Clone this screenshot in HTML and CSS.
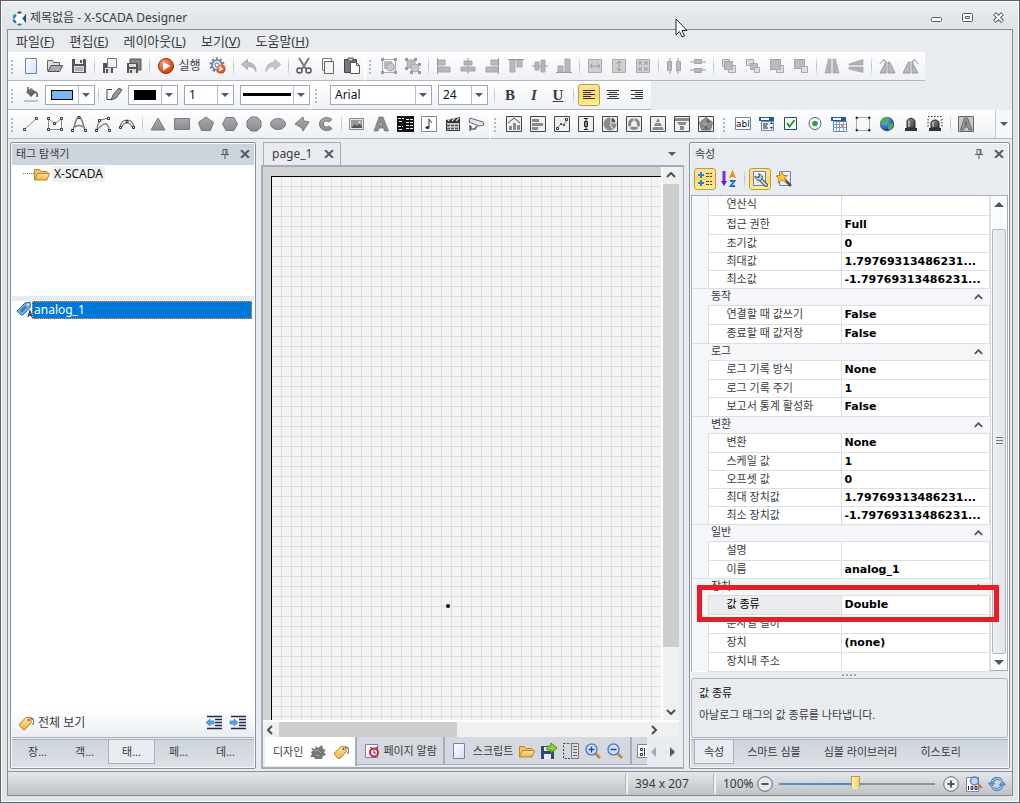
FILE: index.html
```html
<!DOCTYPE html>
<html lang="ko">
<head>
<meta charset="utf-8">
<title>제목없음 - X-SCADA Designer</title>
<link rel="stylesheet" href="styles.css">
</head>
<body>
<svg class="defs" aria-hidden="true">
  <defs>
    <linearGradient id="g-grey" x1="0" y1="0" x2="0" y2="1"><stop offset="0" stop-color="#a9abae"/><stop offset="1" stop-color="#898b8f"/></linearGradient>
    <linearGradient id="g-dark" x1="0" y1="0" x2="1" y2="1"><stop offset="0" stop-color="#999"/><stop offset="1" stop-color="#3c3c3c"/></linearGradient>
    <linearGradient id="g-doc" x1="0" y1="0" x2="1" y2="1"><stop offset="0" stop-color="#fff"/><stop offset="1" stop-color="#d3e0f8"/></linearGradient>
    <linearGradient id="g-gold" x1="0" y1="0" x2="0" y2="1"><stop offset="0" stop-color="#ffe9ae"/><stop offset="1" stop-color="#efaf42"/></linearGradient>
    <radialGradient id="g-red" cx=".35" cy=".3" r=".8"><stop offset="0" stop-color="#ff9a6a"/><stop offset="1" stop-color="#cf2c06"/></radialGradient>
    <radialGradient id="g-globe" cx=".35" cy=".3" r=".8"><stop offset="0" stop-color="#7db8f5"/><stop offset="1" stop-color="#07288a"/></radialGradient>
    <symbol id="i-tag" viewBox="0 0 16 16"><path d="M11 3.500a3.500 3.500 0 0 1 3.500 6" fill="none" stroke="#777" stroke-width="1.500"/><path d="M1.500 9 8 2.500l4.500.5.8 4.500L7 14.500H5L1.500 10.500z" fill="url(#g-gold)" stroke="#b5791f"/><circle cx="10.500" cy="5" r="1" fill="#7a4a10"/></symbol>
    <symbol id="i-folder" viewBox="0 0 16 16"><path d="M.5 14V3.500h5l1.500 2h6V8" fill="#f3c565" stroke="#bf8421"/><path d="M.5 14 3.500 7.500h12L13 14z" fill="url(#g-gold)" stroke="#bf8421"/></symbol>
    <symbol id="i-pin" viewBox="0 0 8 10"><path d="M2 .5h4v5H2zM0 5.500h8M4 6v4M5 1v4" fill="none" stroke="#555b66"/></symbol>
    <symbol id="i-close" viewBox="0 0 10 8"><path d="M1 0 9 8M9 0 1 8" stroke="#555b66" stroke-width="2"/></symbol>
    <symbol id="i-new" viewBox="0 0 16 16"><path d="M2.500.5h11v15h-11z" fill="url(#g-doc)" stroke="#6c86bb"/></symbol>
    <symbol id="i-up" viewBox="0 0 10 6"><path d="m1 5 4-4 4 4" fill="none" stroke="#505050" stroke-width="2"/></symbol>
    <symbol id="i-lens" viewBox="0 0 16 16"><path d="m10 10 5 5" stroke="#c98a45" stroke-width="3"/><circle cx="6.500" cy="6.500" r="5.500" fill="#cfe2fb" stroke="#5b84bd" stroke-width="1.500"/></symbol>
  </defs>
</svg>

<div class="window">
  <header class="titlebar">
    <svg class="logo" viewBox="0 0 16 16"><circle cx="8" cy="8" r="5.500" fill="#fff"/><path d="M5 2 8 0l3 2-3 1z" fill="#3e4b5c"/><path d="M1 4.500 4 3l1 2-2 3H1z" fill="#1d9aa6"/><path d="M1 9h2l2 3-1.500 1L1 11z" fill="#1b6fa8"/><path d="m5 14 3-1 3 1-3 2z" fill="#2d86a3"/><path d="M15 3v10l-4-5z" fill="#1c4f86"/></svg>
    <h1>제목없음 - X-SCADA Designer</h1>
    <div class="window-buttons">
      <button aria-label="최소화"><svg viewBox="0 0 12 12"><rect x=".5" y="5.500" width="10" height="4" rx="1" fill="#fff" stroke="#555b66"/></svg></button>
      <button aria-label="최대화"><svg viewBox="0 0 12 12"><rect x=".5" y="1.500" width="10" height="8" rx="1" fill="#fff" stroke="#555b66"/><path d="M3.500 4.500h4v2h-4z" fill="none" stroke="#555b66"/></svg></button>
      <button aria-label="닫기"><svg viewBox="0 0 12 12"><path d="m1.500 1.500 8 8M9.500 1.500l-8 8" stroke="#555b66" stroke-width="4"/><path d="m2 2 7 7M9 2 2 9" stroke="#fff" stroke-width="2"/></svg></button>
    </div>
    <svg class="cursor" viewBox="0 0 13 20"><path d="M1 1v16l3.500-3.500 2.500 5.500 2.500-1-2.500-5.500h5z" fill="#fff" stroke="#20222c"/></svg>
  </header>

  <div class="frame">
    <nav class="menu">
      <button>파일(<u>F</u>)</button><button>편집(<u>E</u>)</button><button>레이아웃(<u>L</u>)</button><button>보기(<u>V</u>)</button><button>도움말(<u>H</u>)</button>
    </nav>

    <div class="toolbar-row">
      <div class="toolbar">
        <span class="grip"></span>
        <button class="tb" aria-label="새로 만들기"><svg><use href="#i-new"/></svg></button>
        <button class="tb" aria-label="열기"><svg><path d="M.5 13V2.500h5l1 2h6V7" fill="#ddd" stroke="#666"/><path d="m1 13.500 3-6h11.500l-3 6z" fill="#aaa" stroke="#555"/></svg></button>
        <button class="tb" aria-label="저장"><svg><path d="M1 1h13l1 1v13H1z" fill="#555"/><path d="M4 1h8v5H4z" fill="#eee"/><path d="M9 2h2v3H9z" fill="#555"/><path d="M3 8h10v6H3z" fill="#ddd"/><path d="M4 10h8M4 12h8" stroke="#888"/></svg></button>
        <span class="sep"></span>
        <button class="tb" aria-label="다른 이름으로 저장"><svg><path d="M1 5h10v10H1z" fill="#555"/><path d="M3 10h6v5H3z" fill="#ddd"/><path d="M4 11h2v4H4z" fill="#555"/><path d="M5.500.5h9v9h-9z" fill="#f4f4f4" stroke="#777"/></svg></button>
        <button class="tb" aria-label="모두 저장"><svg><path d="M4 1h11v11H4z" fill="#888" stroke="#555"/><path d="M1 5h11v10H1z" fill="#555"/><path d="M3 6h7v3H3zM3 11h7v4H3z" fill="#ddd"/><path d="M4 12h2v3H4z" fill="#555"/></svg></button>
        <span class="sep"></span>
        <button class="tb run"><svg><circle cx="8" cy="8" r="7.500" fill="url(#g-red)" stroke="#a32606"/><path d="m5 3.500 7.500 4.500L5 12.500z" fill="#fff"/></svg>실행</button>
        <button class="tb" aria-label="실행 설정"><svg><circle cx="7" cy="7" r="5" fill="#dde6f5" stroke="#61799f" stroke-width="1.500"/><circle cx="7" cy="7" r="6.500" fill="none" stroke="#61799f" stroke-width="2" stroke-dasharray="2 2.100"/><circle cx="7" cy="7" r="2" fill="#fff" stroke="#61799f"/><circle cx="11" cy="11" r="4.500" fill="url(#g-red)"/><path d="m9.500 8.500 4 2.500-4 2.500z" fill="#fff"/></svg></button>
        <span class="sep"></span>
        <button class="tb" aria-label="실행 취소"><svg><path d="m.5 6.500 6-5v3c5 0 8.500 3 8.500 9-2-4-4-5-8.500-5v3z" fill="#bcbcbc" stroke="#aaa"/></svg></button>
        <button class="tb" aria-label="다시 실행"><svg><path d="m15.500 6.500-6-5v3c-5 0-8.500 3-8.500 9 2-4 4-5 8.500-5v3z" fill="#c4c4c4" stroke="#b4b4b4"/></svg></button>
        <span class="sep"></span>
        <button class="tb" aria-label="잘라내기"><svg><path d="m3 0 7 11M13 0 6 11" stroke="#777" stroke-width="2"/><circle cx="3.500" cy="12.500" r="2.500" fill="#fff" stroke="#555" stroke-width="1.500"/><circle cx="12.500" cy="12.500" r="2.500" fill="#fff" stroke="#555" stroke-width="1.500"/></svg></button>
        <button class="tb" aria-label="복사"><svg><path d="M2.500.5h9v12h-9z" fill="#fff" stroke="#777"/><path d="M4.500 3.500h9v12h-9z" fill="#f4f4f4" stroke="#666"/></svg></button>
        <button class="tb" aria-label="붙여넣기"><svg><path d="M.5 1.500h12v13H.5z" fill="#777" stroke="#444"/><path d="M4 0h5v3H4z" fill="#ccc" stroke="#555"/><path d="M6.500 4.500h6l3 3v8h-9z" fill="#fff" stroke="#555"/><path d="M12.500 4.500v3h3" fill="none" stroke="#555"/></svg></button>
      </div>
      <div class="toolbar split">
        <span class="grip"></span>
        <button class="tb" aria-label="그룹"><svg><path d="M1.500 1.500h13v13h-13z" fill="none" stroke="#aaa"/><path d="M3 3h8v8H3z" fill="#bbb"/><circle cx="9.500" cy="9" r="4" fill="#c8c8c8" stroke="#a6a6a6"/><path d="M0 0h3v3H0zM13 0h3v3h-3zM0 13h3v3H0zM13 13h3v3h-3z" fill="#999"/></svg></button>
        <button class="tb" aria-label="그룹 해제"><svg><path d="M2 2h8v8H2z" fill="#bbb" stroke="#aaa"/><circle cx="10" cy="10" r="4" fill="#c8c8c8" stroke="#a6a6a6"/><path d="M0 0h3v3H0zM9 0h3v3H9zM0 9h3v3H0zM13 5h3v3h-3zM5 13h3v3H5zM13 13h3v3h-3z" fill="#999"/></svg></button>
        <span class="sep"></span>
        <button class="tb" aria-label="왼쪽 맞춤"><svg><path d="M2 2h7v5H2zM2 9h12v5H2z" fill="#b9b9b9" stroke="#a6a6a6"/><path d="M1.500 0v16" stroke="#999"/></svg></button>
        <button class="tb" aria-label="가운데 맞춤"><svg><path d="M8 0v16" stroke="#999"/><path d="M4 3h8v4H4zM1 9h14v4H1z" fill="#b5b5b5" stroke="#a6a6a6"/></svg></button>
        <button class="tb" aria-label="오른쪽 맞춤"><svg><path d="M7 2h7v5H7zM2 9h12v5H2z" fill="#b9b9b9" stroke="#a6a6a6"/><path d="M14.500 0v16" stroke="#999"/></svg></button>
        <button class="tb" aria-label="위쪽 맞춤"><svg><path d="M2 2h5v12H2zM9 2h5v7H9z" fill="#b9b9b9" stroke="#a6a6a6"/><path d="M0 1.500h16" stroke="#999"/></svg></button>
        <button class="tb" aria-label="중간 맞춤"><svg><path d="M0 8h16" stroke="#999"/><path d="M3 4h4v8H3zM9 2h4v12H9z" fill="#b5b5b5" stroke="#a6a6a6"/></svg></button>
        <button class="tb" aria-label="아래쪽 맞춤"><svg><path d="M2 8h5v6H2zM9 1h5v13H9z" fill="#b9b9b9" stroke="#a6a6a6"/><path d="M0 14.500h16" stroke="#999"/></svg></button>
        <span class="sep"></span>
        <button class="tb" aria-label="너비 같게"><svg><path d="M1.500 1.500h13v13h-13z" fill="#d0d0d0" stroke="#aaa"/><path d="M3 8h10M5.500 5.500 3 8l2.500 2.500M10.500 5.500 13 8l-2.500 2.500" fill="none" stroke="#999"/></svg></button>
        <button class="tb" aria-label="높이 같게"><svg><path d="M1.500 1.500h13v13h-13z" fill="#d0d0d0" stroke="#aaa"/><path d="M8 3v10M5.500 5.500 8 3l2.500 2.500M5.500 10.500 8 13l2.500-2.500" fill="none" stroke="#999"/></svg></button>
        <button class="tb" aria-label="크기 같게"><svg><path d="M1.500 1.500h13v13h-13z" fill="#d0d0d0" stroke="#aaa"/><path d="m4 4 3 3M12 4 9 7M4 12l3-3M12 12 9 9M4 7V4h3M9 4h3v3M4 9v3h3M9 12h3V9" fill="none" stroke="#999"/></svg></button>
        <span class="sep"></span>
        <button class="tb" aria-label="가로 간격"><svg><path d="M4 0v16M12 0v16" stroke="#999"/><path d="M1.500 3.500h4v9h-4zM10.500 3.500h4v9h-4z" fill="#bbb" stroke="#a4a4a4"/></svg></button>
        <button class="tb" aria-label="세로 간격"><svg><path d="M0 4h16M0 12h16" stroke="#999"/><path d="M4.500 1.500h7v4h-7zM4.500 10.500h7v4h-7z" fill="#bbb" stroke="#a4a4a4"/></svg></button>
        <span class="sep"></span>
        <button class="tb" aria-label="맨 앞으로"><svg><path d="M1.500 1.500h7v7h-7zM7.500 7.500h7v7h-7z" fill="#ddd" stroke="#aaa"/><path d="M3.500 3.500h8v8h-8z" fill="#bbb" stroke="#a4a4a4"/></svg></button>
        <button class="tb" aria-label="앞으로"><svg><path d="M1.500 1.500h7v6h-7z" fill="#ddd" stroke="#aaa"/><path d="M5.500 5.500h7v6h-7z" fill="#bbb" stroke="#a4a4a4"/><path d="M9.500 9.500h5v5h-5z" fill="#ddd" stroke="#aaa"/></svg></button>
        <button class="tb" aria-label="뒤로"><svg><path d="M7.500 7.500h7v7h-7z" fill="#ddd" stroke="#aaa"/><path d="M1.500 1.500h10v10h-10z" fill="#bbb" stroke="#a4a4a4"/></svg></button>
        <button class="tb" aria-label="맨 뒤로"><svg><path d="M1.500 1.500h10v9h-10z" fill="#bbb" stroke="#a4a4a4"/><path d="M8.500 8.500h6v6h-6z" fill="#ddd" stroke="#aaa"/></svg></button>
        <span class="sep"></span>
        <button class="tb" aria-label="좌우 대칭"><svg><path d="M4.500 1H7v14H1zM9 1h2.500L15 15H9z" fill="#b2b2b2" stroke="#999" stroke-width=".6"/></svg></button>
        <button class="tb" aria-label="상하 대칭"><svg><path d="M1 6 15 1.500V7H1zM1 9h14v5.500L1 11z" fill="#b2b2b2" stroke="#999" stroke-width=".6"/></svg></button>
        <span class="sep"></span>
        <button class="tb" aria-label="왼쪽 회전"><svg><path d="M7 4v11H1zM9 4h1.500L16 15H9z" fill="#bbb" stroke="#999"/><path d="M1 6c1-4 4-4 6-2M4 1l3.500 3" fill="none" stroke="#999"/></svg></button>
        <button class="tb" aria-label="오른쪽 회전"><svg><path d="M9 4v11h6zM7 4H5.500L0 15h7z" fill="#bbb" stroke="#999"/><path d="M15 6c-1-4-4-4-6-2M12 1 8.500 4" fill="none" stroke="#999"/></svg></button>
        <span class="endpad"></span>
      </div>
    </div>

    <div class="toolbar-row">
      <div class="toolbar">
        <span class="grip"></span>
        <button class="tb" aria-label="채우기"><svg><path d="M1 13h14v2H1z" fill="#c4c4c4"/><path d="m3 5 5-4 5 4-5 5z" fill="url(#g-dark)"/><path d="M5 0v6M12 5c3 0 2 3 2 5" fill="none" stroke="#555" stroke-width="1.500"/></svg></button>
        <span class="combo w50"><select class="swatch blue" aria-label="채우기 색"><option label=" "></option></select></span>
        <span class="sep"></span>
        <button class="tb" aria-label="선"><svg><path d="M6 2.500H1v10h5" fill="none" stroke="#444"/><path d="M5 13 7 8l6-7 3 2-6 8z" fill="#999" stroke="#555"/></svg></button>
        <span class="combo w50"><select class="swatch black" aria-label="선 색"><option label=" "></option></select></span>
        <span class="combo w50"><select aria-label="선 두께"><option>1</option></select></span>
        <span class="combo w70"><select class="line" aria-label="선 종류"><option label=" "></option></select></span>
      </div>
      <div class="toolbar split">
        <span class="grip"></span>
        <span class="combo w102"><select aria-label="글꼴"><option>Arial</option></select></span>
        <span class="combo w50"><select aria-label="글꼴 크기"><option>24</option></select></span>
        <span class="sep"></span>
        <button class="tb letter"><b>B</b></button>
        <button class="tb letter"><i>I</i></button>
        <button class="tb letter"><u>U</u></button>
        <span class="sep"></span>
        <button class="tb on" aria-label="왼쪽 정렬"><svg><path d="M2 3.500h12M2 5.500h8M2 7.500h12M2 9.500h8M2 11.500h12" stroke="#333"/></svg></button>
        <button class="tb" aria-label="가운데 정렬"><svg><path d="M2 3.500h12M4 5.500h8M2 7.500h12M4 9.500h8M2 11.500h12" stroke="#333"/></svg></button>
        <button class="tb" aria-label="오른쪽 정렬"><svg><path d="M2 3.500h12M6 5.500h8M2 7.500h12M6 9.500h8M2 11.500h12" stroke="#333"/></svg></button>
        <span class="endpad"></span>
      </div>
    </div>

    <div class="toolbar-row full">
      <div class="toolbar">
        <span class="grip"></span>
        <button class="tb" aria-label="직선"><svg><path d="M2 13 13 3" stroke="#888"/><path d="M.5 12.500h2v2h-2zM12.500 1.500h2v2h-2z" fill="#fff" stroke="#444"/></svg></button>
        <button class="tb" aria-label="다각선"><svg><path d="M1.500 13.500v-11L8 8l6.500-5.500v11z" fill="none" stroke="#888"/><path d="M.5 1.500h2v2h-2zM13.500 1.500h2v2h-2zM.5 12.500h2v2h-2zM13.500 12.500h2v2h-2zM6.500 6.500h2v2h-2z" fill="#fff" stroke="#333"/></svg></button>
        <button class="tb" aria-label="곡선"><svg><path d="M2 14C4 9 5 1 8 1s4 8 6 13M4 11c2-2 6-2 8 0" fill="none" stroke="#777" stroke-width="1.500"/><path d="M.5 13.500h2v2h-2zM13.500 13.500h2v2h-2zM7 .5h2v2H7z" fill="#fff" stroke="#333"/></svg></button>
        <button class="tb" aria-label="닫힌 곡선"><svg><path d="M2 14c0-5 2-8 4-10l8-2M14 14c0-5-3-7-5-6s-4 2-7 6" fill="none" stroke="#777" stroke-width="1.200"/><path d="M.5 13.500h2v2h-2zM13.500 13.500h2v2h-2zM3.500 3.500h2v2h-2zM12.500 1.500h2v2h-2z" fill="#fff" stroke="#333"/></svg></button>
        <button class="tb" aria-label="호"><svg><path d="M1 11C2 6 5 4 8 4s6 2 7 7M3 11c1-3 3-4 5-4s4 1 5 4" fill="none" stroke="#777" stroke-width="1.200"/><path d="M.5 10.500h2v2h-2zM13.500 10.500h2v2h-2zM7 4.500h2v2H7z" fill="#fff" stroke="#333"/></svg></button>
        <span class="sep"></span>
        <button class="tb shape" aria-label="삼각형"><svg><path d="m8 2 7 12H1z"/></svg></button>
        <button class="tb shape" aria-label="사각형"><svg><path d="M.5 2.500h15v11H.5z"/></svg></button>
        <button class="tb shape" aria-label="오각형"><svg><path d="m8 1 7.500 5.500-3 8h-9l-3-8z"/></svg></button>
        <button class="tb shape" aria-label="육각형"><svg><path d="M4 1.500h8l3.500 6.500-3.500 6.500H4L.5 8z"/></svg></button>
        <button class="tb shape" aria-label="팔각형"><svg><path d="M5 1h6l4 4v6l-4 4H5l-4-4V5z"/></svg></button>
        <button class="tb shape" aria-label="타원"><svg><ellipse cx="8" cy="8" rx="7.500" ry="5.500"/></svg></button>
        <button class="tb shape" aria-label="자유 도형"><svg><path d="M1 8 9 1l1 4 5 1-6 9-1-3z"/></svg></button>
        <button class="tb shape" aria-label="파이"><svg><path d="M14 3.500C11 0 1.500 1 1.500 8s9 8.500 12.500 4.500l-3-2.500c-2 2-5.500 1-5.500-2s3-4 5-2z"/></svg></button>
        <span class="sep"></span>
        <button class="tb" aria-label="그림"><svg><path d="M.5 2.500h14v11H.5z" fill="#e6e6e6" stroke="#888"/><path d="M2 4h11v8H2z" fill="#999"/><path d="m2 12 4-4 2 2 2-2 3 2v2z" fill="#555"/><circle cx="10.500" cy="6" r="1.200" fill="#ddd"/></svg></button>
        <button class="tb" aria-label="글자"><svg><path d="M6 1h4l5.500 14h-4L10.500 12H6l-1 3H1zM8 5l-1.200 4.500h2.600z" fill="#8b8d90" stroke="#707276" stroke-width=".7" fill-rule="evenodd"/></svg></button>
        <button class="tb" aria-label="바코드"><svg><path d="M0 0h17v16H0z" fill="#111"/><path d="M1 2.500h6M9 3.500h7M9 6.500h7M2 5.500h4M1 10.500h5M9 9.500h7M9 12.500h7M2 13.500h4" stroke="#eee" stroke-dasharray="3 1"/></svg></button>
        <button class="tb" aria-label="소리"><svg><path d="M.5.5h15v15H.5z" fill="#fff" stroke="#888"/><path d="M8 11V3l3 4" fill="none" stroke="#333"/><ellipse cx="6.500" cy="11.500" rx="2" ry="1.600" fill="#333"/></svg></button>
        <button class="tb" aria-label="동영상"><svg><path d="M1.500 6.500h13v8h-13z" fill="#ccc" stroke="#333"/><path d="m1 4 14-3v5H1z" fill="#333"/><path d="m3 5 3-3M7 5l3-3M11 5l3-3" stroke="#ddd" stroke-width="1.200"/><path d="M2 9.500h12M2 12.500h12" stroke="#555" stroke-width="1.500" stroke-dasharray="3 1"/></svg></button>
        <button class="tb" aria-label="카메라"><svg><path d="m1 2 13 4 1 3-5 1L0 6z" fill="#e6e6ea" stroke="#667"/><path d="M8 10 6 13H2v-3M1 9v6" fill="none" stroke="#667" stroke-width="1.500"/></svg></button>
      </div>
      <div class="toolbar split">
        <span class="grip"></span>
        <button class="tb chart" aria-label="차트"><svg><path class="box" d="M.5.5h15v15H.5z"/><path d="M3 10h3v4H3zM7 7h3v7H7zM11 9h3v5h-3z"/><path d="m2 7 6-5 6 5" fill="none" stroke="#444"/></svg></button>
        <button class="tb chart" aria-label="막대 차트"><svg><path class="box" d="M.5.5h15v15H.5z"/><path d="M2 3h7v3H2zM2 7h11v3H2zM2 11h6v3H2z"/></svg></button>
        <button class="tb chart" aria-label="선 차트"><svg><path class="box" d="M.5.5h15v15H.5z"/><path d="m3 12 4-4 3 1 3-6" fill="none" stroke="#888"/><path d="M2.500 11.500h2v2h-2zM6.500 7.500h1v1h-1zM9.500 8.500h1v1h-1zM11.500 2.500h2v2h-2z" fill="#fff" stroke="#333"/></svg></button>
        <button class="tb chart" aria-label="게이지"><svg><path class="box" d="M.5.5h15v15H.5z"/><path d="M6.500 5.500h3v5h-3zM8 2v12M6 2.500h4M6 13.500h4" stroke="#222" fill="#fff"/></svg></button>
        <button class="tb chart" aria-label="원형 차트"><svg><path class="box" d="M.5.5h15v15H.5z"/><circle cx="8" cy="8" r="6.500"/><path d="M9 7V1a6 6 0 0 1 5 6z" fill="#555" stroke="#fff"/><path d="m8 8 3 5" stroke="#fff"/></svg></button>
        <button class="tb chart" aria-label="도넛 차트"><svg><path class="box" d="M.5.5h15v15H.5z"/><circle cx="8" cy="8" r="4.500" fill="none" stroke="#8a8a8a" stroke-width="3"/><path d="M8 1v4M2 12l4-2M14 12l-4-2" stroke="#fff"/></svg></button>
        <button class="tb chart" aria-label="피라미드"><svg><path class="box" d="M.5.5h15v15H.5z"/><path d="M8 2l2 4H6zM5.500 7h5l1.500 3H4zM3.500 11h9l1.500 3H2z"/></svg></button>
        <button class="tb chart" aria-label="깔때기"><svg><path class="box" d="M.5.5h15v15H.5z"/><path d="M1 2h14v3H1zM3 6h10l-2 3H5zM6 10h4v4H6z"/></svg></button>
        <button class="tb chart" aria-label="방사형 차트"><svg><path class="box" d="M.5.5h15v15H.5z"/><path d="m8 1.500 6.500 5-2 7.500h-9l-2-7.500z" stroke="#777"/><path d="M8 2v6l6-1.500zM8 8l4 5.500H4z" fill="#6a6a6a"/><path d="M8 2v6l6-1.500M8 8l4 5.500M8 8l-4 5.500M8 8 2 6.500" stroke="#bbb" fill="none" stroke-width=".6"/></svg></button>
      </div>
      <div class="toolbar split grow">
        <span class="grip"></span>
        <button class="tb" aria-label="텍스트 상자"><svg><path d="M.5 1.500h15v12H.5z" fill="#fff" stroke="#6d84a5"/><text x="1" y="11" class="abl">abl</text></svg></button>
        <button class="tb" aria-label="콤보 상자"><svg><path d="M0 1h15v4H0z" fill="#29598f"/><path d="M2 2h8v2H2z" fill="#fff"/><path d="M2.500 5.500h12v9h-12z" fill="#e5efff" stroke="#6d8ab6"/><path d="M4 8h5M4 10h4M4 12h5" stroke="#222"/><path d="m11 8 1.500-2L14 8zM11 11l1.500 2 1.500-2z" fill="#222"/></svg></button>
        <button class="tb" aria-label="체크 상자"><svg><path d="M1.500 1.500h12v12h-12z" fill="#fff" stroke="#1e4c79"/><path d="m4 7 2.500 3.500L11.500 4" fill="none" stroke="#259c2e" stroke-width="2"/></svg></button>
        <button class="tb" aria-label="라디오 단추"><svg><circle cx="8" cy="7.500" r="6" fill="#fff" stroke="#3b618e"/><circle cx="8" cy="7.500" r="2.800" fill="#2fa33b"/></svg></button>
        <button class="tb" aria-label="날짜"><svg><path d="M0 1h15v4H0z" fill="#29598f"/><path d="M2 2h8v2H2z" fill="#fff"/><path d="M2.500 5.500h13v10h-13z" fill="#fff" stroke="#5f86c0"/><path d="M2 8.500h13M2 11.500h13M5.500 6v9M8.500 6v9M12.500 6v9" stroke="#7a9bd0"/><path d="M10 9h3v3h-3z" fill="#f08a5a"/></svg></button>
        <button class="tb" aria-label="패널"><svg><path d="M1.500 1.500h13v13h-13z" fill="#f8f8f8" stroke="#aaa"/><path d="M1.500 3V1.500H3M13 1.500h1.500V3M14.500 13v1.500H13M3 14.500H1.500V13" fill="none" stroke="#111" stroke-width="1.500"/></svg></button>
        <button class="tb" aria-label="웹"><svg><circle cx="8" cy="8" r="7.200" fill="url(#g-globe)"/><path d="M3 3c3-3 6-2 7 0L7 7 5 6 2 9C0 6 2 4 3 3zM10 8l4-1c1 3-1 6-4 7-2-2-1-4 0-6z" fill="#4db04a"/></svg></button>
        <button class="tb" aria-label="경보등"><svg><path d="M4 12V6c0-5 8-5 8 0v6z" fill="url(#g-dark)" stroke="#222"/><path d="M2 12h12v3H2z" fill="#333"/><path d="M6 5v6" stroke="#ddd"/></svg></button>
        <button class="tb" aria-label="경보등 점멸"><svg><path d="M4 12V7c0-4 8-4 8 0v5z" fill="url(#g-dark)" stroke="#222"/><path d="M2 12h12v3H2z" fill="#333"/><path d="M6 6v5" stroke="#ddd"/><path d="M1 .5h14M1 3v8M15 3v8" stroke="#333" stroke-dasharray="1.500 1.500"/></svg></button>
        <span class="sep"></span>
        <button class="tb" aria-label="글자 효과"><svg><path d="M.5.5h15v15H.5z" fill="#c6c8cb" stroke="#666"/><path d="M6.500 2h3L14 14h-3l-1-3H6.500l-1 3H2.500zM8 5 7 9h2z" fill="#999" stroke="#666" fill-rule="evenodd"/></svg></button>
        <button class="overflow" aria-label="더 보기"></button>
      </div>
    </div>

    <main class="workspace">
      <section class="panel left">
        <header class="panel-title shaded"><h2>태그 탐색기</h2><button aria-label="고정"><svg class="pin"><use href="#i-pin"/></svg></button><button aria-label="닫기"><svg class="close"><use href="#i-close"/></svg></button></header>
        <div class="tree"><span class="dots"></span><svg class="ico"><use href="#i-folder"/></svg><span class="node">X-SCADA</span></div>
        <div class="tag-list">
          <div class="tag-row"><svg class="ico" viewBox="0 0 16 16"><path d="m1 10 8-8 5-1 .5 5L7 14H5z" fill="#78aede" stroke="#336ea8"/><path d="m4 9.500 5-5 2 2-5 5z" fill="#2f7fc4"/><circle cx="12" cy="3.500" r="1" fill="#fff"/><path d="m12 16 2-6 2 6M12.500 14h3" fill="none" stroke="#1b3c6a" stroke-width="1.300"/></svg><span class="selected">analog_1</span></div>
        </div>
        <div class="list-tools">
          <button><svg class="ico"><use href="#i-tag"/></svg>전체 보기</button>
          <button aria-label="내어쓰기"><svg class="ico" viewBox="0 0 16 16"><path d="M1 1.500h15M9 4.500h7M9 7.500h7M9 10.500h7M1 13.500h15" stroke="#1d2b50" stroke-width="1.400"/><path d="m0 7.500 4-3.500v2h4v3H4v2z" fill="#5ba6ea" stroke="#2b6cb0" stroke-width=".6"/></svg></button>
          <button aria-label="들여쓰기"><svg class="ico" viewBox="0 0 16 16"><path d="M1 1.500h15M9 4.500h7M9 7.500h7M9 10.500h7M1 13.500h15" stroke="#1d2b50" stroke-width="1.400"/><path d="M8 7.500 4 4v2H0v3h4v2z" fill="#5ba6ea" stroke="#2b6cb0" stroke-width=".6"/></svg></button>
        </div>
        <nav class="tabs equal"><button>장...</button><button>객...</button><button class="active">태...</button><button>페...</button><button>데...</button></nav>
      </section>

      <section class="editor">
        <div class="doc-tabs"><div class="doc-tab"><span>page_1</span><button aria-label="탭 닫기"><svg class="close"><use href="#i-close"/></svg></button></div><button class="drop" aria-label="문서 목록"></button></div>
        <div class="doc">
          <div class="canvas-wrap"><div class="canvas"><span class="dot"></span></div></div>
          <div class="vbar"><svg class="arrow"><use href="#i-up"/></svg><span class="thumb"></span><svg class="arrow down"><use href="#i-up"/></svg></div>
          <div class="hbar"><svg class="arrow lt"><use href="#i-up"/></svg><span class="thumb"></span><svg class="arrow rt"><use href="#i-up"/></svg></div>
        </div>
        <nav class="view-tabs">
          <div class="vt active"><button>디자인</button><svg class="ico" viewBox="0 0 16 16"><path d="m1 4 4 1 1-3 2 2 4-3 1 4 3 1-2 2 2 3-3 1-1 3-4 0-3 0-1-2-4 0 2-3-1-2 2-1z" fill="#777"/><path d="m4 7 4-1 3 3M6 11l3 1" fill="none" stroke="#aaa"/></svg><svg class="ico"><use href="#i-tag"/></svg></div>
          <div class="vt"><svg class="ico" viewBox="0 0 16 16"><path d="M1.500 1.500h12v13h-12z" fill="#fff" stroke="#6c86bb"/><circle cx="10" cy="9.500" r="4" fill="#fff" stroke="#d0202a" stroke-width="2"/><path d="M10 7v3h2M6 4l2 1M14 4l-2 1" fill="none" stroke="#a0131b"/></svg><button>페이지 알람</button></div>
          <div class="vt wide"><svg class="ico"><use href="#i-new"/></svg><button>스크립트</button>
            <svg class="ico"><use href="#i-folder"/></svg>
            <svg class="ico" viewBox="0 0 16 16"><path d="M0 3h13v13H0z" fill="#2e4a78"/><path d="M3 4h7v4H3zM3 11h7v5H3z" fill="#e5ebf5"/><path d="M6 3h4V0l6 5-6 5V7H6z" fill="#8fd32c" stroke="#4b8d12"/></svg>
            <svg class="ico" viewBox="0 0 16 16"><path d="M.5.5h8v15h-8z" fill="none" stroke="#444" stroke-dasharray="2 1.500"/><path d="M8.500.5h7v15h-7z" fill="#ddd" stroke="#777"/><path d="M10 3.500h4M10 6.500h4M10 9.500h4M10 12.500h4" stroke="#666"/></svg>
            <svg class="ico" viewBox="0 0 16 16"><use href="#i-lens"/><path d="M3.500 6.500h6M6.500 3.500v6" stroke="#234f96" stroke-width="1.500"/></svg>
            <svg class="ico" viewBox="0 0 16 16"><use href="#i-lens"/><path d="M3.500 6.500h6" stroke="#234f96" stroke-width="1.500"/></svg>
          </div>
          <div class="vt cut"><svg class="ico" viewBox="0 0 16 16"><path d="M.5 1.500h14v13H.5z" fill="#fff" stroke="#6c86bb"/><path d="M3.500 5.500h2v2h-2zM3.500 10.500h2v2h-2zM7.500 5v8" fill="none" stroke="#333"/></svg></div>
          <div class="nav-arrows"><button class="prev" aria-label="이전"></button><button class="next" aria-label="다음"></button></div>
        </nav>
      </section>

      <section class="panel right">
        <header class="panel-title"><h2>속성</h2><button aria-label="고정"><svg class="pin"><use href="#i-pin"/></svg></button><button aria-label="닫기"><svg class="close"><use href="#i-close"/></svg></button></header>
        <div class="prop-tools">
          <button class="tb on" aria-label="항목별"><svg><path d="M1 4h6M4 1v6M1 12h6M4 9v6" stroke="#2483d6" stroke-width="2"/><path d="M9 2.500h6M9 5.500h6M9 10.500h6M9 13.500h6" stroke="#444" stroke-dasharray="3 1"/></svg></button>
          <button class="tb" aria-label="사전순"><svg><path d="M3 0v11" stroke="#7b2fd0" stroke-width="3"/><path d="M0 10h6l-3 5z" fill="#5a1fc0"/><path d="m9 7 2.500-6L14 7M10 5h3" fill="none" stroke="#f08c1a" stroke-width="1.800"/><path d="M9 10h4.500L9.500 15H14" fill="none" stroke="#1878c8" stroke-width="1.800"/></svg></button>
          <span class="sep"></span>
          <button class="tb on" aria-label="속성"><svg><path d="M1.500.5h12v14h-12z" fill="url(#g-doc)" stroke="#6c86bb"/><path d="m7 7 7 7" stroke="#4b5563" stroke-width="4" stroke-linecap="round"/><path d="m7 7 7 7" stroke="#c8d0dc" stroke-width="2" stroke-linecap="round"/><path d="M3 5c0 4 5 6 7 3 1-3-1-5-4-5l2 2-2 2z" fill="#c8d0dc" stroke="#4b5563"/></svg></button>
          <button class="tb" aria-label="이벤트"><svg><path d="M3.500.5h11v14h-11z" fill="url(#g-doc)" stroke="#6c86bb"/><path d="m8 8 7 7" stroke="#6b4a2a" stroke-width="2.500"/><path d="m6 1 1.500 3.500 4 0-3 2.500L10 11 6 9l-4 3 1-4.500L0 5l4-.5z" fill="#ffc63e" stroke="#d87f14"/></svg></button>
        </div>
        <div class="grid-box">
          <table class="props">
            <colgroup><col class="c-indent"><col class="c-name"><col></colgroup>
            <tbody>
            <tr><td></td><th scope="row">연산식</th><td></td></tr>
            <tr><td></td><th scope="row">접근 권한</th><td>Full</td></tr>
            <tr class="num"><td></td><th scope="row">초기값</th><td>0</td></tr>
            <tr class="num"><td></td><th scope="row">최대값</th><td>1.79769313486231...</td></tr>
            <tr class="num"><td></td><th scope="row">최소값</th><td>-1.79769313486231...</td></tr>
            <tr class="cat"><td></td><th colspan="2">동작<svg class="fold"><use href="#i-up"/></svg></th></tr>
            <tr><td></td><th scope="row">연결할 때 값쓰기</th><td>False</td></tr>
            <tr><td></td><th scope="row">종료할 때 값저장</th><td>False</td></tr>
            <tr class="cat"><td></td><th colspan="2">로그<svg class="fold"><use href="#i-up"/></svg></th></tr>
            <tr><td></td><th scope="row">로그 기록 방식</th><td>None</td></tr>
            <tr class="num"><td></td><th scope="row">로그 기록 주기</th><td>1</td></tr>
            <tr><td></td><th scope="row">보고서 통계 활성화</th><td>False</td></tr>
            <tr class="cat"><td></td><th colspan="2">변환<svg class="fold"><use href="#i-up"/></svg></th></tr>
            <tr><td></td><th scope="row">변환</th><td>None</td></tr>
            <tr class="num"><td></td><th scope="row">스케일 값</th><td>1</td></tr>
            <tr class="num"><td></td><th scope="row">오프셋 값</th><td>0</td></tr>
            <tr class="num"><td></td><th scope="row">최대 장치값</th><td>1.79769313486231...</td></tr>
            <tr class="num"><td></td><th scope="row">최소 장치값</th><td>-1.79769313486231...</td></tr>
            <tr class="cat"><td></td><th colspan="2">일반<svg class="fold"><use href="#i-up"/></svg></th></tr>
            <tr><td></td><th scope="row">설명</th><td></td></tr>
            <tr class="num"><td></td><th scope="row">이름</th><td>analog_1</td></tr>
            <tr class="cat"><td></td><th colspan="2">장치<svg class="fold"><use href="#i-up"/></svg></th></tr>
            <tr class="current"><td></td><th scope="row">값 종류</th><td>Double</td></tr>
            <tr><td></td><th scope="row">문자열 길이</th><td></td></tr>
            <tr><td></td><th scope="row">장치</th><td>(none)</td></tr>
            <tr><td></td><th scope="row">장치내 주소</th><td></td></tr>
            </tbody>
          </table>
          <div class="pbar"><span class="tri up"></span><span class="thumb"></span><span class="tri"></span></div>
          <div class="highlight"></div>
        </div>
        <div class="splitter"></div>
        <div class="desc"><h3>값 종류</h3><p>아날로그 태그의 값 종류를 나타냅니다.</p></div>
        <nav class="tabs"><button class="active">속성</button><button>스마트 심볼</button><button>심볼 라이브러리</button><button>히스토리</button></nav>
      </section>
    </main>

    <footer class="status">
      <span class="cell coords">394 x 207</span>
      <span class="cell zoom">100%</span>
      <button aria-label="축소"><svg class="ico" viewBox="0 0 16 16"><circle cx="8" cy="8" r="7.300" fill="#e6e8eb" stroke="#666c76"/><path d="M4.500 8h7" stroke="#555" stroke-width="2"/></svg></button>
      <input type="range" min="0" max="100" value="49" aria-label="확대 비율">
      <button aria-label="확대"><svg class="ico" viewBox="0 0 16 16"><circle cx="8" cy="8" r="7.300" fill="#f2f3f5" stroke="#666c76"/><path d="M4.500 8h7M8 4.500v7" stroke="#555" stroke-width="2"/></svg></button>
      <button aria-label="100% 보기"><svg class="ico" viewBox="0 0 16 16"><path d="M.5 1.500h12v14H.5z" fill="#fff" stroke="#6c86bb"/><circle cx="8.500" cy="5" r="4" fill="#b9d6f6" stroke="#5b84bd" stroke-width="1.500"/><path d="m12 8 3.500 4" stroke="#c77a3a" stroke-width="2.500"/><path d="M2.500 10v4M5 10.500h2v3H5zM9 10.500h2v3H9z" fill="none" stroke="#223"/></svg></button>
      <button aria-label="새로 고침"><svg class="ico" viewBox="0 0 16 16"><path d="M3 7c1-5 7-6 9.500-2.500M13 9c-1 5-7 6-9.500 2.500" fill="none" stroke="#2e6cab" stroke-width="3"/><path d="M3 7c1-5 7-6 9.500-2.500M13 9c-1 5-7 6-9.500 2.500" fill="none" stroke="#8fc3ef" stroke-width="1.500"/><path d="M-.5 7h6L2.500 11zM16.500 9h-6l3-4z" fill="#6aaae3" stroke="#2e6cab" stroke-width=".7"/></svg></button>
    </footer>
  </div>
</div>
</body>
</html>
```
FILE: styles.css
```css
* { box-sizing: border-box; }
body {
  margin: 0;
  font: 12px/16px "Noto Sans", "Noto Sans CJK KR", sans-serif;
  color: #3b3b3b;
}
button { margin: 0; padding: 0; border: 0; background: none; font: inherit; color: inherit; }
h1, h2, h3, p { margin: 0; font-size: 12px; font-weight: 400; }
svg { display: block; flex: none; }
.defs { position: absolute; width: 0; height: 0; }
.ico { width: 16px; height: 16px; overflow: visible; }
.pin { width: 8px; height: 10px; }
.close { width: 10px; height: 8px; }

.window {
  display: flex;
  flex-direction: column;
  height: 100vh;
  padding: 1px 6px 6px;
  border: 1px solid #5b6370;
  background: linear-gradient(#ebedf1, #e0e4e5 28px);
  box-shadow: inset 0 0 0 1px #fff;
}
.titlebar { position: relative; display: flex; align-items: center; height: 27px; padding: 5px 8px 0 5px; flex: none; }
.logo { width: 15px; height: 15px; margin-right: 3px; }
.titlebar h1 { flex: 1; line-height: 18px; }
.window-buttons { display: flex; gap: 19px; }
.window-buttons svg { width: 12px; height: 12px; }
.cursor { position: absolute; left: 668px; top: 16px; width: 13px; height: 20px; z-index: 3; }

.frame { flex: 1; min-height: 0; display: flex; flex-direction: column; border: 1px solid #868c92; background: #e8ecf0; }
.menu { display: flex; gap: 15px; height: 22px; padding-left: 8px; flex: none; font-size: 13px; }

.toolbar-row { display: flex; height: 29px; flex: none; }
.toolbar { display: flex; align-items: center; border-bottom: 1px solid #b2b7c0; background: linear-gradient(#fff, #edf0f4); }
.split { border-left: 2px solid #fff; }
.grow { flex: 1; }
.endpad { width: 2px; }
.grip { width: 11px; height: 16px; background: linear-gradient(transparent 2px, #b4b8be 2px) 3px 0 / 2px 4px repeat-y; }
.sep { width: 7px; height: 20px; background: linear-gradient(transparent, #b9bcc2, transparent) 3px 0 / 1px 20px no-repeat; }
.tb { display: flex; align-items: center; justify-content: center; width: 24px; height: 24px; flex: none; }
.tb svg { width: 16px; height: 16px; overflow: visible; }
.run { width: 53px; gap: 4px; }
.on { width: 22px; height: 22px; margin: 0 1px; border: 1px solid #c09b3c; border-radius: 3px; background: linear-gradient(#fde5a0, #fed96c 50%, #fff08f); }
.letter { font: 700 15px "Liberation Serif", serif; }
.shape svg > * { fill: url(#g-grey); stroke: #77797d; }
.chart svg { fill: #8a8a8a; }
.chart .box { fill: #f0f0f0; stroke: #444; }
.abl { font: 9px "DejaVu Sans", sans-serif; fill: #111; }
.overflow { position: relative; width: 17px; height: 28px; margin-left: auto; border-left: 1px solid #c4c8ce; background: #f5f7f9; }
.overflow::after, .drop::after, .combo::after { content: ""; display: block; margin: auto; width: 0; border: 4px solid transparent; border-top-color: #555b66; border-bottom: 0; }

.combo { position: relative; display: flex; height: 20px; margin-left: 2px; border: 1px solid #a0a8b4; background: #fff; }
.combo + .combo { margin-left: 6px; }
.combo select { width: 100%; padding: 0 0 0 4px; border: 0; appearance: none; background: transparent; font: inherit; color: #111; outline: 0; }
.combo::after { position: absolute; right: 4px; top: 7px; }
.combo::before { content: ""; position: absolute; right: 15px; top: 0; bottom: 0; border-left: 1px solid #b8bec8; }
.w50 { width: 50px; }
.w70 { width: 70px; }
.w102 { width: 102px; }
.grip + .w102 { margin-left: 7px; }
.split .w50 { margin-right: 3px; }
.combo .blue { background: linear-gradient(#79b5f0, #79b5f0) 6px 5px / 20px 8px no-repeat, linear-gradient(#000, #000) 5px 4px / 22px 10px no-repeat; }
.combo .black { background: linear-gradient(#000, #000) 5px 4px / 22px 10px no-repeat; }
.combo .line { background: linear-gradient(#000, #000) 2px 7px / 48px 3px no-repeat; }

.workspace { flex: 1; min-height: 0; display: flex; gap: 5px; padding: 3px 2px 2px; }
.panel { display: flex; flex-direction: column; border: 1px solid #8b919b; border-radius: 2px; background: #e8ecf0; box-shadow: inset 0 0 0 1px #f8f9fa; min-height: 0; }
.left { width: 246px; flex: none; padding: 1px; }
.right { width: 321px; flex: none; padding: 1px; }
.panel-title { display: flex; align-items: center; gap: 11px; height: 21px; flex: none; padding: 0 4px 2px; }
.shaded { background: #cdd4dc; }
.panel-title h2 { flex: 1; font-size: 11px; }
.tree { display: flex; align-items: flex-start; height: 131px; flex: none; padding: 1px 0 0 11px; background: #fff; color: #111; }
.dots { width: 11px; height: 8px; border-bottom: 1px dotted #777; }
.node { margin-left: 2px; padding: 0 2px; background: #f0f0f0; }
.tag-list { flex: 1; min-height: 0; margin-top: 5px; background: #fff; }
.tag-row { display: flex; padding: 0 2px 0 4px; }
.selected { flex: 1; height: 18px; border: 1px dotted #f09030; background: #0078d7; color: #fff; padding-left: 1px; }
.list-tools { display: flex; align-items: center; gap: 8px; height: 29px; flex: none; padding: 0 8px 0 6px; background: linear-gradient(#fff, #eaedf1); border-bottom: 1px solid #a8afb9; }
.list-tools button:first-child { display: flex; gap: 4px; margin-right: auto; }

.tabs { display: flex; height: 28px; flex: none; background: linear-gradient(#cdd4dc, #dde1e7); font-size: 11px; border-top: 1px solid #a8afb9; margin-top: 1px; }
.tabs button { height: 24px; border: 1px solid transparent; border-top: 0; }
.tabs.equal { padding-left: 2px; }
.tabs.equal button { width: 47px; }
.tabs .active { background: #e8ecf0; border-color: #a8afb9; }

.editor { flex: 1; min-width: 0; display: flex; flex-direction: column; }
.doc-tabs { display: flex; height: 23px; flex: none; padding-left: 2px; }
.doc-tab { display: flex; align-items: center; gap: 12px; padding: 0 6px 0 8px; border: 1px solid #a5adb9; border-bottom: 0; }
.drop { margin-left: auto; width: 25px; }
.doc { flex: 1; min-height: 0; display: grid; grid-template: minmax(0, 1fr) 17px / minmax(0, 1fr) 18px; border: 2px solid #a5adb9; border-right-width: 1px; border-bottom: 0; padding-right: 4px; background: #e8ecf0; }
.canvas-wrap { padding: 9px 0 0 8px; background: #d2d2d2; display: flex; }
.canvas { position: relative; flex: 1; border: 1px solid #000; border-width: 1px 0 0 1px; background: repeating-linear-gradient(90deg, transparent 0 9px, #dcdcdc 9px 10px), repeating-linear-gradient(#f4f4f4 0 9px, #dcdcdc 9px 10px); }
.dot { position: absolute; left: 174px; top: 427px; width: 4px; height: 4px; border-radius: 50%; background: #000; }
.vbar { display: flex; flex-direction: column; align-items: center; padding: 5px 0; background: #f0f0f0; border-left: 2px solid #fff; }
.vbar .thumb { width: 100%; height: 463px; margin: 6px 0 auto; background: #cdcdcd; }
.hbar { grid-column: span 2; display: flex; align-items: center; padding: 0 20px 0 2px; background: #f0f0f0; border-top: 2px solid #fff; }
.hbar .thumb { width: 178px; height: 100%; margin: 0 auto 0 4px; background: #cdcdcd; }
.arrow { width: 10px; height: 6px; }
.down { transform: rotate(180deg); }
.lt { transform: rotate(-90deg); }
.rt { transform: rotate(90deg); }

.view-tabs { display: flex; height: 32px; flex: none; padding-left: 2px; border: 1px solid #a5adb9; border-width: 0 1px 2px 2px; font-size: 11px; background: #e8ecf0; }
.vt { display: flex; align-items: center; gap: 3px; height: 28px; padding: 0 6px 0 7px; border-right: 2px solid #a5adb9; border-bottom: 1px solid #a5adb9; background: #d5d9df; flex: none; white-space: nowrap; }
.vt.active { gap: 7px; height: 29px; background: #fff; border-bottom: 0; padding: 0 6px 0 8px; }
.vt.wide { gap: 6px; padding: 0 7px 0 6px; }
.vt.cut { width: 15px; padding: 0 0 0 5px; overflow: hidden; border-right: 0; }
.nav-arrows { flex: 1; display: flex; justify-content: flex-end; align-items: center; gap: 14px; padding-right: 8px; background: #e8ecf0; z-index: 1; }
.prev, .next { border: 5px solid transparent; width: 0; height: 0; }
.prev { border-right-color: #a5a9b0; border-left: 0; }
.next { border-left-color: #555b66; border-right: 0; }

.prop-tools { display: flex; align-items: center; height: 30px; flex: none; padding: 0 2px 2px; }
.grid-box { position: relative; display: flex; align-items: flex-start; flex: 1; min-height: 0; border: 1px solid #a5adb9; background: #fff; }
.props { flex: 1; min-width: 0; table-layout: fixed; border-collapse: collapse; background: #fff; }
.c-indent { width: 16px; }
.c-name { width: 133px; }
.props tr { height: 19px; }
.props .num { height: 18px; }
.props .cat { height: 17px; }
.props th, .props td { padding: 0 0 0 3px; border: 0 solid #dcdfe2; border-width: 0 1px 1px 0; line-height: 15px; text-align: left; vertical-align: middle; white-space: nowrap; }
.props th { padding-left: 18px; font-size: 11px; font-weight: 400; vertical-align: top; }
.props td { font: 700 11px/15px "DejaVu Sans", sans-serif; color: #000; }
.props td:first-child { background: #f4f6f9; border-bottom: 0; }
.props .cat th { padding-left: 3px; background: #f4f6f9; border-right: 0; line-height: 14px; }
.props .cat td:first-child { border-right: 0; border-top: 1px solid #dcdfe2; }
.fold { float: right; width: 9px; height: 6px; margin: 5px 7px 0 0; }
.current th { background: #ebecee; color: #000; }
.pbar { align-self: stretch; width: 17px; display: flex; flex-direction: column; align-items: center; padding: 6px 1px 5px; border-left: 1px solid #dcdfe2; background: #fbfcfc; }
.pbar .thumb { width: 14px; flex: 1; margin: 22px 0 6px; border: 1px solid #b2b7bf; border-radius: 2px; background: linear-gradient(#777, #777) 3px 207px / 7px 1px no-repeat, linear-gradient(#777, #777) 3px 210px / 7px 1px no-repeat, linear-gradient(#777, #777) 3px 213px / 7px 1px no-repeat, linear-gradient(90deg, #eff1f3, #e1e4e7); }
.tri { border: 5px solid transparent; border-top-color: #555; border-bottom: 0; }
.tri.up { border-top: 0; border-bottom: 5px solid #555; }
.highlight { position: absolute; left: 5px; right: 8px; top: 389px; height: 37px; border: 5px solid #ed1c24; }
.splitter { height: 7px; flex: none; padding: 3px 151px 2px; background: linear-gradient(90deg, #a0a5ad 2px, transparent 2px) 0 0 / 4px 2px repeat-x content-box; }
.desc { height: 60px; flex: none; padding: 6px 7px; border: 1px solid #b0b5bd; border-radius: 3px; font-size: 11px; }
.desc h3, .desc p { font-size: 11px; }
.desc h3 { color: #111; margin-bottom: 6px; }
.right .tabs { padding-left: 3px; }
.right .tabs button { padding: 0 9px; margin-right: 3px; }

.status { display: flex; align-items: center; height: 24px; flex: none; padding-right: 7px; border-top: 1px solid #8b919b; background: linear-gradient(#e4e7ea, #bfc3c8); }
.cell { display: flex; align-items: center; height: 21px; padding-left: 7px; border-left: 2px solid #f2f3f5; box-shadow: -1px 0 #b0b4ba; }
.coords { margin-left: auto; width: 88px; }
.zoom { width: 43px; }
.status input { width: 156px; height: 20px; margin: 0 8px 0 6px; padding: 0; appearance: none; background: linear-gradient(90deg, #5d8fc4, #4c84bf 50%, #8d939b 55%) center / 100% 2px no-repeat; }
.status button + button { margin-left: 7px; }
.status input::-webkit-slider-thumb { appearance: none; width: 9px; height: 15px; border: 1px solid #c39a3a; background: linear-gradient(90deg, #fff2b8, #f5cf6a); clip-path: polygon(0 0, 100% 0, 100% 70%, 50% 100%, 0 70%); }
```
